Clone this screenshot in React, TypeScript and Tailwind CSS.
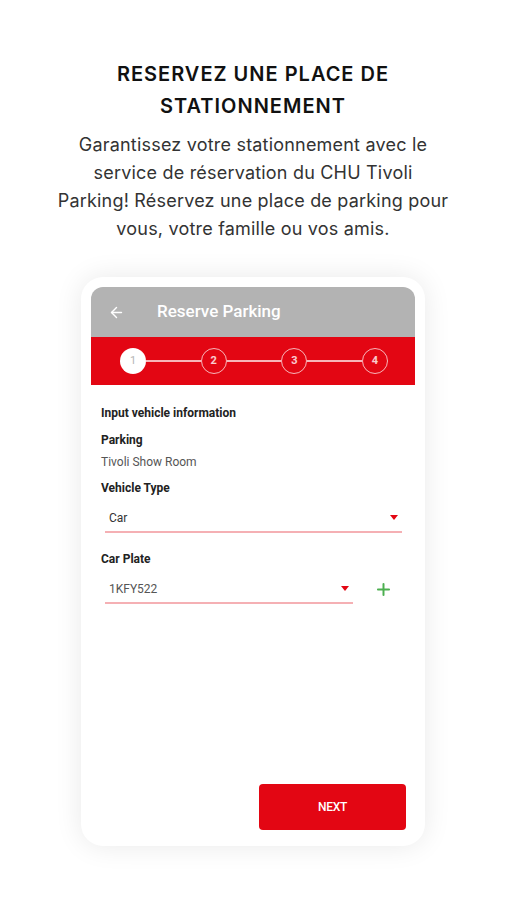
import { ArrowLeft, Plus } from "lucide-react";

const steps = [1, 2, 3, 4];

function Caret() {
  return (
    <svg width="8" height="5" viewBox="0 0 8 5" className="shrink-0">
      <path d="M0 0 L8 0 L4 5 Z" fill="#e30613" />
    </svg>
  );
}

function StepBar() {
  return (
    <div className="h-[48px] bg-[#e30613] flex items-center pl-[29px] pr-[27px]">
      {steps.map((n, i) => (
        <div key={n} className={i === 0 ? "flex items-center" : "flex items-center flex-1"}>
          {i > 0 && <div className="flex-1 h-[2px] bg-white/70" />}
          {n === 1 ? (
            <div className="w-[26px] h-[26px] rounded-full bg-white flex items-center justify-center text-[11px] text-[#b5b5b5]">
              1
            </div>
          ) : (
            <div className="w-[26px] h-[26px] rounded-full border-[1.5px] border-white/70 flex items-center justify-center text-[11px] font-bold text-white/80">
              {n}
            </div>
          )}
        </div>
      ))}
    </div>
  );
}

export default function App() {
  return (
    <div className="w-[506px] min-h-[900px] bg-white flex flex-col items-center font-['Inter',sans-serif]">
      <h1 className="mt-[58px] text-[20px] leading-[32px] font-semibold text-center text-[#111] tracking-[1px]">
        RESERVEZ UNE PLACE DE
        <br />
        STATIONNEMENT
      </h1>
      <p className="mt-[9px] text-[18px] leading-[28px] text-[#333] text-center tracking-[0.2px]">
        Garantissez votre stationnement avec le
        <br />
        service de réservation du CHU Tivoli
        <br />
        Parking! Réservez une place de parking pour
        <br />
        vous, votre famille ou vos amis.
      </p>

      <div className="mt-[34px] w-[344px] h-[569px] rounded-[22px] bg-white shadow-[0_0_28px_rgba(0,0,0,0.09)] p-[10px] flex flex-col font-['Roboto',sans-serif]">
        <div className="flex-1 flex flex-col rounded-t-[12px] overflow-hidden">
          <div className="h-[50px] bg-[#b3b3b3] flex items-center pl-[17px]">
            <ArrowLeft className="w-[17px] h-[17px] text-white" strokeWidth={2} />
            <span className="ml-[32px] text-[17px] font-medium text-white">Reserve Parking</span>
          </div>
          <StepBar />

          <div className="flex-1 flex flex-col pl-[10px] pt-[20px]">
            <div className="text-[12px] leading-[16px] font-bold text-[#222]">Input vehicle information</div>
            <div className="mt-[11px] text-[12px] leading-[16px] font-bold text-[#222]">Parking</div>
            <div className="mt-[6px] text-[12px] leading-[16px] text-[#555]">Tivoli Show Room</div>
            <div className="mt-[10px] text-[12px] leading-[16px] font-bold text-[#222]">Vehicle Type</div>

            <div className="mt-[8px] ml-[4px] mr-[13px] h-[29px] flex items-center justify-between border-b-2 border-[#f5b0b4] pl-[4px] pr-[4px]">
              <span className="text-[12px] text-[#333]">Car</span>
              <Caret />
            </div>

            <div className="mt-[18px] text-[12px] leading-[16px] font-bold text-[#222]">Car Plate</div>

            <div className="mt-[8px] ml-[4px] flex items-center">
              <div className="w-[248px] h-[29px] flex items-center justify-between border-b-2 border-[#f5b0b4] pl-[4px] pr-[4px]">
                <span className="text-[12px] text-[#555]">1KFY522</span>
                <Caret />
              </div>
              <Plus className="ml-[21px] w-[19px] h-[19px] text-[#4caf50]" strokeWidth={2.5} />
            </div>

            <div className="flex-1" />
            <button className="self-end mr-[9px] mb-[6px] w-[147px] h-[46px] rounded-[4px] bg-[#e30613] text-white text-[12px] font-medium tracking-[-0.3px]">
              NEXT
            </button>
          </div>
        </div>
      </div>
    </div>
  );
}
